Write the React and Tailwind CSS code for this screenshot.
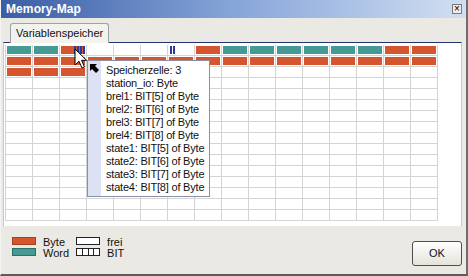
import React from 'react';
import { clsx } from 'clsx';

const font = "font-['Liberation_Sans',Arial,sans-serif]";

const fill = {
  t: 'bg-[#459a94]',
  r: 'bg-[#d4552e]',
  e: '',
};

const row0 = [
  ['t'], ['t'], ['r', [5, 6, 7, 8]], ['e'], ['e'], ['e'], ['e', [1, 2]], ['r'],
  ['t'], ['t'], ['t'], ['t'], ['t'], ['t'], ['r'], ['r'],
];
const row1 = Array.from({ length: 16 }, () => ['r']);
const row2 = Array.from({ length: 16 }, (_, i) => [i < 3 ? 'r' : 'e']);
const empty = Array.from({ length: 16 }, () => ['e']);

const rows = [row0, row1, row2, ...Array.from({ length: 13 }, () => empty)];

const tipLines = [
  'Speicherzelle: 3',
  'station_io: Byte',
  'brel1: BIT[5] of Byte',
  'brel2: BIT[6] of Byte',
  'brel3: BIT[7] of Byte',
  'brel4: BIT[8] of Byte',
  'state1: BIT[5] of Byte',
  'state2: BIT[6] of Byte',
  'state3: BIT[7] of Byte',
  'state4: BIT[8] of Byte',
];

function Cell({ kind, bits }) {
  return (
    <div className="w-[27px] h-[11px] shrink-0 border-r border-b border-[#d4d4d4]">
      <div className={clsx('ml-px mr-px mt-px h-[8px]', fill[kind])}>
        {bits && (
          <div className="flex h-full pl-px gap-px">
            {[1, 2, 3, 4, 5, 6, 7, 8].map((b) => (
              <div
                key={b}
                className={clsx('w-[2px] h-full', bits.includes(b) && 'bg-[#2b3a9a]')}
              />
            ))}
          </div>
        )}
      </div>
    </div>
  );
}

export default function App() {
  return (
    <div
      className={clsx(
        'relative w-[468px] h-[276px] flex flex-col bg-[#ebe9e3] border-l border-l-[#f4f4f4] border-r-2 border-r-[#6e6e6e] border-b-2 border-b-[#5c5c5c] overflow-hidden',
        font
      )}
    >
      {/* title bar */}
      <div className="h-[18px] shrink-0 flex items-center justify-between pl-[5px] pr-[4px] bg-linear-to-r from-[#3b5da4] via-[#86a5d8] to-[#d2dff2]">
        <span className="text-white font-bold text-[12px] leading-none tracking-[0.1px]">Memory-Map</span>
        <div className="w-[10px] h-[10px] border border-[#7a7a7a] bg-[#ececec] flex items-center justify-center text-[10px] leading-none text-black">
          ×
        </div>
      </div>

      {/* tab row */}
      <div className="h-[24px] shrink-0 flex items-end pl-[9px]">
        <div className="relative z-10 -mb-px h-[20px] px-[5px] flex items-center bg-[#f3f2ec] border border-b-0 border-[#9aa3ad] rounded-t-[3px] text-[11px] text-[#111]">
          Variablenspeicher
        </div>
      </div>

      {/* panel */}
      <div className="ml-[2px] mr-[4px] h-[184px] shrink-0 bg-white border-t border-t-[#25336e] border-l border-l-[#c9c9c9] border-r border-r-[#c9c9c9] pt-[2px]">
        <div className="ml-px w-fit border-l border-[#d4d4d4]">
          {rows.map((r, i) => (
            <div key={i} className="flex">
              {r.map(([k, bits], j) => (
                <Cell key={j} kind={k} bits={bits} />
              ))}
            </div>
          ))}
        </div>
      </div>

      {/* bottom area */}
      <div className="flex-1 flex justify-between pl-[11px] pr-[4px]">
        <div className="mt-[11px] grid grid-cols-[24px_auto_24px_auto] grid-rows-[11px_11px] gap-x-[7px] text-[11px] leading-[11px] text-[#111]">
          <div className="h-[8px] bg-[#d4552e] border border-[#a8401f]" />
          <span>Byte</span>
          <div className="h-[8px] bg-white border border-[#222]" />
          <span>frei</span>
          <div className="h-[8px] bg-[#459a94] border border-[#2f6e69]" />
          <span>Word</span>
          <div className="h-[8px] bg-white border border-[#222] flex">
            <div className="flex-1 border-r border-[#222]" />
            <div className="flex-1 border-r border-[#222]" />
            <div className="flex-1 border-r border-[#222]" />
            <div className="flex-1" />
          </div>
          <span>BIT</span>
        </div>
        <button className="mt-[15px] w-[50px] h-[25px] rounded-[3px] border border-[#4f4f4f] bg-linear-to-b from-white to-[#e4e2da] text-[11px] text-[#111]">
          OK
        </button>
      </div>

      {/* tooltip */}
      <div className="absolute left-[86px] top-[60px] w-[123px] flex bg-white border border-[#8c90a4] text-[11px] tracking-[-0.2px] leading-[13px] text-[#111]">
        <div className="w-[13px] shrink-0 bg-[#dce2f4]">
          <svg width="9" height="9" viewBox="0 0 9 9" className="mt-[3px] ml-[2px]">
            <path d="M0 0 H7 L5 2 L9 6 L6 9 L2 5 L0 7 Z" fill="#000" />
          </svg>
        </div>
        <div className="pl-[5px] pt-[3px] pb-[2px] whitespace-nowrap">
          {tipLines.map((l) => (
            <div key={l}>{l}</div>
          ))}
        </div>
      </div>

      {/* mouse cursor */}
      <svg className="absolute left-[73px] top-[48px]" width="14" height="22" viewBox="0 0 14 22">
        <path
          d="M1 1 L1 17 L5 13.2 L8 20 L10.5 19 L7.6 12.3 L12.6 12.3 Z"
          fill="#fff"
          stroke="#000"
          strokeWidth="1"
          strokeLinejoin="miter"
        />
      </svg>
    </div>
  );
}
